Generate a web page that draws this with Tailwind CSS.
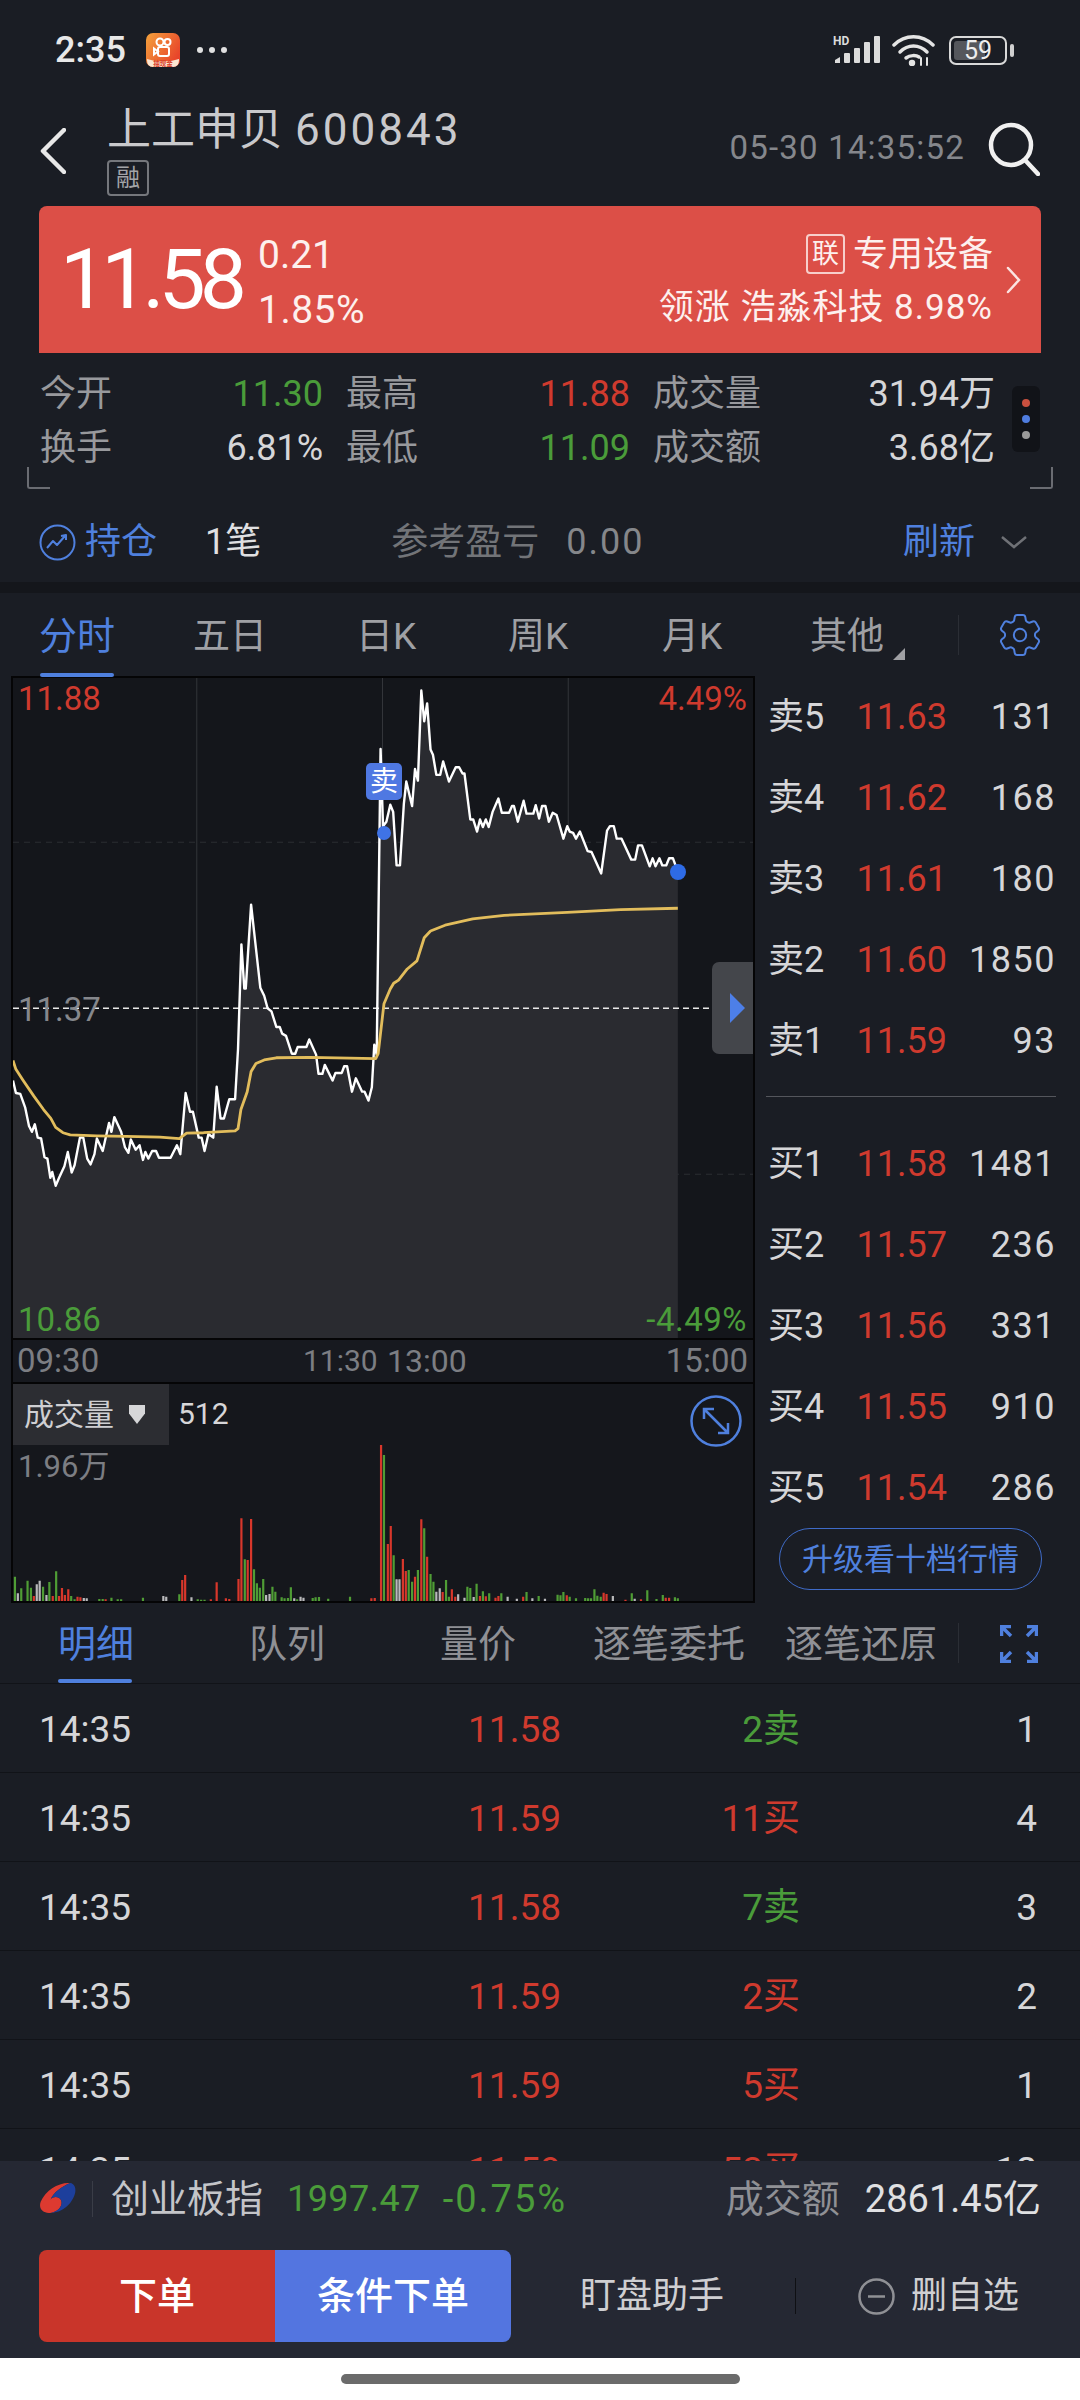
<!DOCTYPE html>
<html lang="zh-CN">
<head>
<meta charset="UTF-8" />
<title>上工申贝 600843</title>
<script src="https://cdn.jsdelivr.net/npm/@tailwindcss/browser@4"></script>
</head>
<body class="bg-white">
<div class="w-[1080px] h-[2400px] flex flex-col overflow-hidden bg-[#1a1d24] font-['Roboto','Noto_Sans_CJK_SC',sans-serif] text-[#d6d6d8]">

  <!-- status bar -->
  <div class="h-[100px] shrink-0 flex items-center pl-[55px] pr-[66px]">
    <span class="text-[36px] font-medium text-[#e8e8e8] w-[91px]">2:35</span>
    <svg width="34" height="34" viewBox="0 0 34 34">
      <defs><linearGradient id="ks" x1="0" y1="0" x2="1" y2="0.6"><stop offset="0" stop-color="#f4a23c"/><stop offset="1" stop-color="#e8442a"/></linearGradient></defs>
      <rect width="34" height="34" rx="7" fill="url(#ks)"/>
      <path d="M1 26 Q17 31 33 26 V27 Q33 34 27 34 H7 Q1 34 1 27Z" fill="#fbe6d2"/>
      <g fill="none" stroke="#fff" stroke-width="2"><circle cx="14" cy="9" r="3.500"/><circle cx="21.500" cy="9" r="3"/><rect x="12" y="14" width="11" height="9" rx="2"/><path d="M12 18.500 L8 15.500 V21.500Z"/></g>
      <text x="17" y="32.500" font-size="6.500" font-weight="700" text-anchor="middle" fill="#d8402a">抽现金</text>
    </svg>
    <div class="ml-[17px] flex gap-[6px]">
      <span class="w-[6px] h-[6px] rounded-full bg-[#e0e0e0]"></span>
      <span class="w-[6px] h-[6px] rounded-full bg-[#e0e0e0]"></span>
      <span class="w-[6px] h-[6px] rounded-full bg-[#e0e0e0]"></span>
    </div>
    <div class="ml-auto flex items-center">
      <svg width="47" height="28" viewBox="0 0 47 28" fill="#dcdcdc">
        <text x="0" y="9" font-size="12" font-weight="700" font-family="Roboto">HD</text>
        <path d="M2 27 V24 L7 21 V27Z"/><rect x="11" y="17" width="6" height="10" rx="1"/><rect x="21" y="12" width="6" height="15" rx="1"/><rect x="31" y="6" width="6" height="21" rx="1"/><rect x="41" y="0" width="6" height="27" rx="1"/>
      </svg>
      <svg class="ml-[12px]" width="43" height="32" viewBox="0 0 43 32" fill="none" stroke="#e4e4e4" stroke-width="3.500" stroke-linecap="round">
        <path d="M2 11 C13 0 30 0 41 11"/><path d="M8 18 C16 10 27 10 35 18"/><path d="M14 24 C18 21 24 21 27 23"/><circle cx="20" cy="29" r="1.500" fill="#e4e4e4"/>
        <path d="M29 24 V31 M35 24 V31" stroke-width="2"/>
      </svg>
      <div class="ml-[14px] flex items-center">
        <div class="w-[58px] h-[29px] rounded-[7px] border-2 border-[#d8d8d8] p-[3px] relative">
          <div class="w-[31px] h-full rounded-[3px] bg-[#55575c]"></div>
          <span class="absolute inset-0 flex items-center justify-center text-[25px] text-[#eeeeee] leading-none">59</span>
        </div>
        <div class="w-[4px] h-[13px] ml-[3px] bg-[#d0d0d0] rounded-[2px]"></div>
      </div>
    </div>
  </div>

  <!-- header -->
  <div class="h-[106px] shrink-0 relative flex pl-[40px] pr-[40px]">
    <svg class="mt-[28px]" width="26" height="46" viewBox="0 0 26 46" fill="none" stroke="#e8e8e8" stroke-width="4.500" stroke-linecap="round" stroke-linejoin="round"><path d="M24 2 L3 23 L24 44"/></svg>
    <div class="ml-[41px]">
      <div class="h-[60px] flex items-center text-[44px] leading-none text-[#c9c9cc]">上工申贝<span class="ml-[12px] tracking-[3px]">600843</span></div>
      <div class="w-[42px] h-[36px] border-2 border-[#75777c] rounded-[4px] flex items-center justify-center text-[24px] leading-none text-[#a3a4a8]">融</div>
    </div>
    <span class="ml-auto mt-[31px] text-[33px] leading-[34px] text-[#85878c] tracking-[1.2px]">05-30 14:35:52</span>
    <svg class="ml-[23px] mt-[22px]" width="52" height="54" viewBox="0 0 52 54" fill="none" stroke="#f0f0f0" stroke-width="4.500" stroke-linecap="round"><circle cx="23" cy="23" r="20"/><path d="M37 38 L50 52"/></svg>
  </div>

  <!-- price card -->
  <div class="mx-[39px] h-[147px] shrink-0 rounded-t-[8px] bg-[#dc4f47] flex items-center pl-[21px] pr-[20px] text-white">
    <span class="text-[84px] leading-none tracking-[-6px]">11.58</span>
    <div class="ml-[17px] pt-[6px] text-[39px] leading-none text-[#fdf0ee] flex flex-col gap-[16px]">
      <span>0.21</span>
      <span class="tracking-[0.5px]">1.85%</span>
    </div>
    <div class="ml-auto flex flex-col items-end gap-[16px] text-[#fdf0ee]">
      <div class="flex items-center text-[35px] leading-none">
        <span class="w-[39px] h-[40px] border-2 border-[#f7cfcb] rounded-[4px] flex items-center justify-center text-[27px] mr-[8px]">联</span>专用设备
      </div>
      <div class="text-[35px] leading-none tracking-[1px]">领涨 浩淼科技 8.98%</div>
    </div>
    <svg class="ml-[13px]" width="15" height="28" viewBox="0 0 15 28" fill="none" stroke="#fbe4e2" stroke-width="2.500" stroke-linecap="round"><path d="M2 2 L13 14 L2 26"/></svg>
  </div>

  <!-- stats -->
  <div class="h-[121px] shrink-0 relative pt-[14px] pl-[40px]">
    <div class="grid grid-cols-[283px_284px_342px] gap-x-[23px] text-[36px] leading-[54px]">
      <div class="flex justify-between"><span class="text-[#98999d]">今开</span><span class="text-[#4a9c3a]">11.30</span></div>
      <div class="flex justify-between"><span class="text-[#98999d]">最高</span><span class="text-[#cf3a2e]">11.88</span></div>
      <div class="flex justify-between"><span class="text-[#98999d]">成交量</span><span>31.94万</span></div>
      <div class="flex justify-between"><span class="text-[#98999d]">换手</span><span>6.81%</span></div>
      <div class="flex justify-between"><span class="text-[#98999d]">最低</span><span class="text-[#4a9c3a]">11.09</span></div>
      <div class="flex justify-between"><span class="text-[#98999d]">成交额</span><span>3.68亿</span></div>
    </div>
    <div class="absolute left-[1012px] top-[33px] w-[28px] h-[66px] rounded-[6px] bg-[#111318] flex flex-col items-center justify-center gap-[8px]">
      <span class="w-[8px] h-[8px] rounded-full bg-[#c9503f]"></span>
      <span class="w-[8px] h-[8px] rounded-full bg-[#4f7de0]"></span>
      <span class="w-[8px] h-[8px] rounded-full bg-[#9a9a9a]"></span>
    </div>
    <div class="absolute left-[27px] top-[114px] w-[23px] h-[22px] border-l-2 border-b-2 border-[#6a6c72] rounded-bl-[3px]"></div>
    <div class="absolute left-[1030px] top-[114px] w-[23px] h-[22px] border-r-2 border-b-2 border-[#6a6c72] rounded-br-[3px]"></div>
  </div>

  <!-- holdings -->
  <div class="h-[108px] shrink-0 flex items-center pt-[28px] pl-[39px] pr-[52px] text-[36px] leading-none">
    <svg width="37" height="37" viewBox="0 0 37 37" fill="none" stroke="#4f80de" stroke-width="2"><circle cx="18.500" cy="18.500" r="17"/><path d="M8 24 L14 17 L18 21 L26 12 M22 12 L27 11 L27 16" stroke-linejoin="round"/></svg>
    <span class="ml-[9px] text-[#4f80de]">持仓</span>
    <span class="ml-[48px] text-[#e0e0e2]">1笔</span>
    <span class="ml-[130px] text-[37px] text-[#727478]">参考盈亏</span>
    <span class="ml-[27px] tracking-[2px] text-[#85878b]">0.00</span>
    <span class="ml-auto text-[#4f80de]">刷新</span>
    <svg class="ml-[25px]" width="28" height="14" viewBox="0 0 28 14" fill="none" stroke="#6f7176" stroke-width="2.500"><path d="M2 2 L14 12 L26 2"/></svg>
  </div>

  <div class="h-[11px] shrink-0 bg-[#14161b]"></div>

  <!-- chart tabs -->
  <div class="h-[83px] shrink-0 relative text-[37px] leading-none text-[#9fa0a4]">
    <span class="absolute left-[39px] top-[24px] text-[#4f80de] text-[38px]">分时</span>
    <div class="absolute left-[40px] top-[80px] w-[74px] h-[4px] rounded-full bg-[#4f80de]"></div>
    <span class="absolute left-[193px] top-[25px]">五日</span>
    <span class="absolute left-[356px] top-[25px]">日K</span>
    <span class="absolute left-[508px] top-[25px]">周K</span>
    <span class="absolute left-[662px] top-[25px]">月K</span>
    <span class="absolute left-[810px] top-[25px]">其他</span>
    <div class="absolute left-[893px] top-[55px] w-0 h-0 border-l-[12px] border-l-transparent border-b-[12px] border-b-[#9fa0a4]"></div>
    <div class="absolute left-[958px] top-[22px] w-px h-[40px] bg-[#2b2e35]"></div>
    <svg class="absolute left-[999px] top-[21px]" width="42" height="42" viewBox="2.500 2.500 19 19" fill="none" stroke="#4f80de" stroke-width="0.900" stroke-linejoin="round"><path d="M9.594 3.94c.09-.542.56-.94 1.11-.94h2.593c.55 0 1.02.398 1.11.94l.213 1.281c.063.374.313.686.645.87.074.04.147.083.22.127.325.196.72.257 1.075.124l1.217-.456a1.125 1.125 0 011.37.49l1.296 2.247a1.125 1.125 0 01-.26 1.431l-1.003.827c-.293.241-.438.613-.43.992a7.723 7.723 0 010 .255c-.008.378.137.75.43.991l1.004.827c.424.35.534.955.26 1.43l-1.298 2.247a1.125 1.125 0 01-1.369.491l-1.217-.456c-.355-.133-.75-.072-1.076.124a6.47 6.47 0 01-.22.128c-.331.183-.581.495-.644.869l-.213 1.281c-.09.543-.56.94-1.11.94h-2.594c-.55 0-1.019-.398-1.11-.94l-.213-1.281c-.062-.374-.312-.686-.644-.87a6.52 6.52 0 01-.22-.127c-.325-.196-.72-.257-1.076-.124l-1.217.456a1.125 1.125 0 01-1.369-.49l-1.297-2.247a1.125 1.125 0 01.26-1.431l1.004-.827c.292-.24.437-.613.43-.991a6.932 6.932 0 010-.255c.007-.38-.138-.751-.43-.992l-1.004-.827a1.125 1.125 0 01-.26-1.43l1.297-2.247a1.125 1.125 0 011.37-.491l1.216.456c.356.133.751.072 1.076-.124.072-.044.146-.086.22-.128.332-.183.582-.495.644-.869l.214-1.28z"/><circle cx="12" cy="12" r="2.800"/></svg>
  </div>

  <!-- chart and order book -->
  <div class="h-[927px] shrink-0 flex">
    <div class="ml-[11px] w-[744px] shrink-0 bg-[#050506] p-[2px] flex flex-col gap-[2px]">
      <div class="h-[660px] relative bg-[#14161b] overflow-hidden">
        <svg class="absolute inset-0" width="740" height="660" viewBox="27 18 1526 1479" preserveAspectRatio="none">
          <path d="M406 18V1497M789 18V1497M1172 18V1497" stroke="#33353a" stroke-width="1" vector-effect="non-scaling-stroke"/>
          <path d="M27 386H1553M27 1130H1553" stroke="#2c2e33" stroke-width="1" stroke-dasharray="6 5" vector-effect="non-scaling-stroke"/>
          <polygon fill="#2a2b30" points="27,1497 27,920 33,948 42,950 52,980 60,1022 66,1035 72,1018 78,1048 85,1050 92,1092 98,1095 104,1138 108,1125 115,1156 122,1138 133,1112 140,1080 148,1126 154,1110 165,1048 172,1048 180,1095 187,1108 195,1085 200,1050 212,1078 225,1015 230,1035 236,1002 250,1035 258,1070 265,1082 270,1052 280,1075 288,1065 295,1098 300,1080 306,1095 314,1078 322,1078 328,1093 352,1093 365,1065 372,1085 383,948 392,990 398,990 410,1048 416,1048 422,1078 430,1040 440,1048 447,934 455,1005 462,1005 473,962 485,962 491,850 498,615 504,714 507,714 518,526 537,712 545,730 552,758 560,765 570,800 577,800 582,815 590,820 602,860 609,860 614,845 632,845 638,828 652,862 657,905 665,905 670,885 686,920 692,903 705,903 710,888 716,888 726,945 734,915 747,945 752,945 760,965 767,935 772,840 777,862 785,177 790,350 797,340 805,302 811,318 818,438 825,438 833,300 838,250 850,305 856,222 862,248 869,46 875,115 881,75 888,178 893,190 900,235 908,235 914,205 926,250 940,218 947,218 954,232 958,232 970,335 976,335 984,362 990,335 996,352 1002,335 1008,352 1016,318 1028,288 1035,320 1050,320 1056,305 1060,305 1068,340 1080,293 1086,322 1100,322 1105,303 1112,333 1118,305 1125,305 1132,340 1140,320 1148,325 1162,378 1170,350 1175,362 1182,365 1188,378 1196,362 1212,406 1220,408 1240,456 1252,360 1258,350 1266,350 1272,378 1282,378 1302,425 1310,425 1316,393 1324,393 1340,440 1346,422 1352,440 1360,422 1366,438 1374,438 1380,422 1388,422 1398,452 1398,1497"/>
          <path d="M27 758H1553" stroke="#e8e8e8" stroke-width="1.500" stroke-dasharray="6 4" vector-effect="non-scaling-stroke"/>
          <polyline fill="none" stroke="#ffffff" stroke-width="2.400" stroke-linejoin="round" vector-effect="non-scaling-stroke" points="27,920 33,948 42,950 52,980 60,1022 66,1035 72,1018 78,1048 85,1050 92,1092 98,1095 104,1138 108,1125 115,1156 122,1138 133,1112 140,1080 148,1126 154,1110 165,1048 172,1048 180,1095 187,1108 195,1085 200,1050 212,1078 225,1015 230,1035 236,1002 250,1035 258,1070 265,1082 270,1052 280,1075 288,1065 295,1098 300,1080 306,1095 314,1078 322,1078 328,1093 352,1093 365,1065 372,1085 383,948 392,990 398,990 410,1048 416,1048 422,1078 430,1040 440,1048 447,934 455,1005 462,1005 473,962 485,962 491,850 498,615 504,714 507,714 518,526 537,712 545,730 552,758 560,765 570,800 577,800 582,815 590,820 602,860 609,860 614,845 632,845 638,828 652,862 657,905 665,905 670,885 686,920 692,903 705,903 710,888 716,888 726,945 734,915 747,945 752,945 760,965 767,935 772,840 777,862 785,177 790,350 797,340 805,302 811,318 818,438 825,438 833,300 838,250 850,305 856,222 862,248 869,46 875,115 881,75 888,178 893,190 900,235 908,235 914,205 926,250 940,218 947,218 954,232 958,232 970,335 976,335 984,362 990,335 996,352 1002,335 1008,352 1016,318 1028,288 1035,320 1050,320 1056,305 1060,305 1068,340 1080,293 1086,322 1100,322 1105,303 1112,333 1118,305 1125,305 1132,340 1140,320 1148,325 1162,378 1170,350 1175,362 1182,365 1188,378 1196,362 1212,406 1220,408 1240,456 1252,360 1258,350 1266,350 1272,378 1282,378 1302,425 1310,425 1316,393 1324,393 1340,440 1346,422 1352,440 1360,422 1366,438 1374,438 1380,422 1388,422 1398,452"/>
          <polyline fill="none" stroke="#e2bd5c" stroke-width="2.800" stroke-linejoin="round" vector-effect="non-scaling-stroke" points="27,875 33,895 48,920 70,955 90,985 105,1005 115,1025 130,1037 145,1042 200,1044 260,1045 330,1047 370,1050 385,1038 420,1037 485,1033 491,1028 497,985 510,945 518,900 528,882 545,874 570,869 640,868 775,871 780,860 792,748 805,715 812,702 822,695 840,670 860,652 875,600 888,585 918,572 975,558 1040,550 1170,543 1280,537 1398,534"/>
        </svg>
        <span class="absolute left-[5px] top-[4px] text-[33px] leading-[34px] text-[#cf3a2e]">11.88</span>
        <span class="absolute right-[6px] top-[4px] text-[33px] leading-[34px] text-[#cf3a2e]">4.49%</span>
        <span class="absolute left-[5px] top-[315px] text-[33px] leading-[34px] text-[#85878c]">11.37</span>
        <span class="absolute left-[5px] bottom-[1px] text-[33px] leading-[34px] text-[#4a9c3a]">10.86</span>
        <span class="absolute right-[6px] bottom-[1px] text-[33px] leading-[34px] tracking-[0.5px] text-[#4a9c3a]">-4.49%</span>
        <div class="absolute left-[353px] top-[85px] w-[36px] h-[37px] rounded-[5px] bg-[#4f78e2] flex items-center justify-center text-[28px] leading-none text-white">卖</div>
        <div class="absolute left-[364px] top-[148px] w-[14px] h-[14px] rounded-full bg-[#3f73e6]"></div>
        <div class="absolute left-[657px] top-[186px] w-[16px] h-[16px] rounded-full bg-[#2e6be6]"></div>
        <div class="absolute left-[699px] top-[284px] w-[41px] h-[92px] rounded-l-[7px] bg-[#44464b] flex items-center pl-[18px]">
          <div class="w-0 h-0 border-y-[15px] border-y-transparent border-l-[15px] border-l-[#4d7fe8]"></div>
        </div>
      </div>
      <div class="h-[42px] shrink-0 bg-[#17191f] relative text-[33px] leading-[42px] text-[#7c7e83]">
        <span class="absolute left-[4px]">09:30</span>
        <span class="absolute left-[290px] text-[30px]">11:30</span>
        <span class="absolute left-[374px] text-[32px]">13:00</span>
        <span class="absolute right-[5px]">15:00</span>
      </div>
      <div class="flex-1 relative bg-[#15171c] overflow-hidden">
        <div class="w-[156px] h-[61px] bg-[#2c2d32] flex items-center pl-[11px] text-[30px] leading-none text-[#cfcfd2]">成交量
          <div class="ml-[15px] w-[16px] h-[19px] bg-[#d6d6d8] [clip-path:polygon(0_0,100%_0,100%_45%,50%_100%,0_45%)]"></div>
        </div>
        <span class="absolute left-[165px] top-[13px] text-[30px] leading-[34px] text-[#d6d6d8]">512</span>
        <span class="absolute left-[5px] top-[66px] text-[31px] leading-[34px] text-[#7c7e83]">1.96万</span>
        <svg class="absolute left-[677px] top-[11px]" width="52" height="52" viewBox="0 0 52 52" fill="none" stroke="#4f80de" stroke-width="2.500"><circle cx="26" cy="26" r="24.500"/><path d="M14 14 L38 38 M14 24 V14 H24 M38 28 V38 H28"/></svg>
        <svg class="absolute inset-0" width="740" height="217" viewBox="27 132 1526 651" preserveAspectRatio="none">
          <g fill="none" stroke-width="2.200">
            <path vector-effect="non-scaling-stroke" stroke="#4f9d35" d="M31 783V710M44 783V745M57 783V722M64 783V743M89 783V740M102 783V726M116 783V694M147 783V768M154 783V778M205 783V777M212 783V777M230 783V773M243 783V778M250 783V778M295 783V773M370 783V763M408 783V778M415 783V779M422 783V779M505 783V658M524 783V688M530 783V730M536 783V743M543 783V717M562 783V740M568 783V755M581 783V772M587 783V775M594 783V774M600 783V742M613 783V778M645 783V774M651 783V772M658 783V771M677 783V776M722 783V770M792 783V345M812 783V646M843 783V690M850 783V725M862 783V690M875 783V565M888 783V702M894 783V725M920 783V720M926 783V770M964 783V740M970 783V744M983 783V731M996 783V754M1009 783V760M1034 783V760M1086 783V756M1111 783V768M1150 783V764M1156 783V766M1162 783V756M1175 783V770M1188 783V775M1207 783V774M1213 783V775M1219 783V775M1226 783V748M1232 783V767M1239 783V770M1303 783V760M1335 783V751M1354 783V777M1367 783V765M1392 783V772M1398 783V775"/>
            <path vector-effect="non-scaling-stroke" stroke="#d8372b" d="M70 783V768M109 783V768M122 783V768M128 783V744M134 783V765M141 783V748M160 783V770M166 783V772M218 783V778M376 783V720M382 783V705M435 783V778M447 783V727M466 783V775M473 783V777M492 783V717M498 783V535M511 783V660M518 783V537M766 783V775M773 783V774M786 783V315M800 783V612M806 783V558M831 783V657M837 783V693M856 783V710M869 783V538M881 783V650M913 783V756M932 783V748M939 783V770M990 783V768M1002 783V769M1022 783V773M1028 783V768M1079 783V770M1169 783V766M1245 783V758M1251 783V762M1290 783V779M1322 783V778M1373 783V773M1380 783V773"/>
            <path vector-effect="non-scaling-stroke" stroke="#b9b9bb" d="M37 783V760M76 783V733M82 783V722M96 783V765M173 783V774M179 783V775M337 783V768M343 783V770M395 783V772M549 783V765M556 783V762M607 783V775M620 783V770M626 783V773M818 783V718M824 783V718M900 783V755M907 783V745M945 783V763M958 783V773M977 783V771M1047 783V770M1066 783V776M1098 783V775M1124 783V776M1264 783V768M1309 783V776"/>
          </g>
        </svg>
      </div>
    </div>

    <!-- order book -->
    <div class="w-[325px] pl-[13px] pr-[24px] text-[36px] leading-none whitespace-nowrap">
      <div class="h-[81px] flex items-center"><span class="w-[56px]">卖5</span><span class="w-[123px] text-right text-[#cf3a2e]">11.63</span><span class="flex-1 text-right tracking-[1.500px]">131</span></div>
      <div class="h-[81px] flex items-center"><span class="w-[56px]">卖4</span><span class="w-[123px] text-right text-[#cf3a2e]">11.62</span><span class="flex-1 text-right tracking-[1.500px]">168</span></div>
      <div class="h-[81px] flex items-center"><span class="w-[56px]">卖3</span><span class="w-[123px] text-right text-[#cf3a2e]">11.61</span><span class="flex-1 text-right tracking-[1.500px]">180</span></div>
      <div class="h-[81px] flex items-center"><span class="w-[56px]">卖2</span><span class="w-[123px] text-right text-[#cf3a2e]">11.60</span><span class="flex-1 text-right tracking-[1.500px]">1850</span></div>
      <div class="h-[81px] flex items-center"><span class="w-[56px]">卖1</span><span class="w-[123px] text-right text-[#cf3a2e]">11.59</span><span class="flex-1 text-right tracking-[1.500px]">93</span></div>
      <div class="h-px mt-[15px] mb-[26px] -ml-[2px] bg-[#54565c]"></div>
      <div class="h-[81px] flex items-center"><span class="w-[56px]">买1</span><span class="w-[123px] text-right text-[#cf3a2e]">11.58</span><span class="flex-1 text-right tracking-[1.500px]">1481</span></div>
      <div class="h-[81px] flex items-center"><span class="w-[56px]">买2</span><span class="w-[123px] text-right text-[#cf3a2e]">11.57</span><span class="flex-1 text-right tracking-[1.500px]">236</span></div>
      <div class="h-[81px] flex items-center"><span class="w-[56px]">买3</span><span class="w-[123px] text-right text-[#cf3a2e]">11.56</span><span class="flex-1 text-right tracking-[1.500px]">331</span></div>
      <div class="h-[81px] flex items-center"><span class="w-[56px]">买4</span><span class="w-[123px] text-right text-[#cf3a2e]">11.55</span><span class="flex-1 text-right tracking-[1.500px]">910</span></div>
      <div class="h-[81px] flex items-center"><span class="w-[56px]">买5</span><span class="w-[123px] text-right text-[#cf3a2e]">11.54</span><span class="flex-1 text-right tracking-[1.500px]">286</span></div>
      <div class="ml-[11px] w-[263px] h-[62px] rounded-full border border-[#3f6bc8] flex items-center justify-center text-[31px] text-[#4f80de]">升级看十档行情</div>
    </div>
  </div>

  <!-- detail tabs -->
  <div class="h-[81px] shrink-0 relative border-b border-[#111318] text-[38px] leading-none text-[#8f9095]">
    <span class="absolute left-[58px] top-[22px] text-[#4f80de]">明细</span>
    <div class="absolute left-[58px] top-[76px] w-[74px] h-[4px] rounded-full bg-[#4f80de]"></div>
    <span class="absolute left-[249px] top-[22px]">队列</span>
    <span class="absolute left-[440px] top-[22px]">量价</span>
    <span class="absolute left-[593px] top-[22px]">逐笔委托</span>
    <span class="absolute left-[785px] top-[22px]">逐笔还原</span>
    <div class="absolute left-[958px] top-[20px] w-px h-[40px] bg-[#2b2e35]"></div>
    <svg class="absolute left-[1000px] top-[22px]" width="38" height="38" viewBox="0 0 38 38" fill="none" stroke="#4f80de" stroke-width="3.500"><path d="M1.500 11V1.500H11M2 2L11 11M27 1.500H36.500V11M36 2L27 11M1.500 27V36.500H11M2 36L11 27M36.500 27V36.500H27M36 36L27 27"/></svg>
  </div>

  <!-- trade rows -->
  <div class="flex-1 overflow-hidden text-[37px] leading-none">
    <div class="h-[89px] pt-[2px] pl-[39px] grid grid-cols-[94px_428px_239px_237px] items-center border-b border-[#111318]"><span>14:35</span><span class="text-right text-[#cf3a2e]">11.58</span><span class="text-right text-[#4a9c3a]">2卖</span><span class="text-right">1</span></div>
    <div class="h-[89px] pt-[2px] pl-[39px] grid grid-cols-[94px_428px_239px_237px] items-center border-b border-[#111318]"><span>14:35</span><span class="text-right text-[#cf3a2e]">11.59</span><span class="text-right text-[#cf3a2e]">11买</span><span class="text-right">4</span></div>
    <div class="h-[89px] pt-[2px] pl-[39px] grid grid-cols-[94px_428px_239px_237px] items-center border-b border-[#111318]"><span>14:35</span><span class="text-right text-[#cf3a2e]">11.58</span><span class="text-right text-[#4a9c3a]">7卖</span><span class="text-right">3</span></div>
    <div class="h-[89px] pt-[2px] pl-[39px] grid grid-cols-[94px_428px_239px_237px] items-center border-b border-[#111318]"><span>14:35</span><span class="text-right text-[#cf3a2e]">11.59</span><span class="text-right text-[#cf3a2e]">2买</span><span class="text-right">2</span></div>
    <div class="h-[89px] pt-[2px] pl-[39px] grid grid-cols-[94px_428px_239px_237px] items-center border-b border-[#111318]"><span>14:35</span><span class="text-right text-[#cf3a2e]">11.59</span><span class="text-right text-[#cf3a2e]">5买</span><span class="text-right">1</span></div>
    <div class="h-[89px] pb-[6px] pl-[39px] grid grid-cols-[94px_428px_239px_237px] items-center"><span>14:35</span><span class="text-right text-[#cf3a2e]">11.59</span><span class="text-right text-[#cf3a2e]">53买</span><span class="text-right">12</span></div>
  </div>

  <!-- bottom bar -->
  <div class="h-[197px] shrink-0 bg-[#252833] px-[39px]">
    <div class="h-[73px] pt-[2px] flex items-center text-[38px] leading-none">
      <svg width="38" height="33" viewBox="25 35 115 100"><path d="M120 38 C85 35 45 60 30 95 C22 118 40 132 62 128 C85 124 98 105 92 90 C85 78 68 78 60 88 C70 65 95 48 120 38Z" fill="#dd3a30"/><path d="M120 38 C95 48 70 65 60 88 C68 78 85 78 92 90 C98 105 85 124 62 128 C95 128 128 100 135 65 C137 50 130 40 120 38Z" fill="#1d3f9c"/></svg>
      <div class="ml-[15px] w-px h-[36px] bg-[#3a3d47]"></div>
      <span class="ml-[18px] text-[#c4c5c9]">创业板指</span>
      <span class="ml-[24px] text-[36px] tracking-[0.4px] text-[#4a9c3a]">1997.47</span>
      <span class="ml-[22px] tracking-[2px] text-[#4a9c3a]">-0.75%</span>
      <span class="ml-auto text-[#8f9095]">成交额</span>
      <span class="ml-[25px] text-[#e0e0e2]">2861.45亿</span>
    </div>
    <div class="mt-[16px] h-[92px] flex items-center">
      <div class="w-[236px] h-full rounded-l-[8px] bg-[#c9352a] flex items-center justify-center text-[38px] font-medium text-white">下单</div>
      <div class="w-[236px] h-full rounded-r-[8px] bg-[#5375e0] flex items-center justify-center text-[38px] font-medium text-white">条件下单</div>
      <span class="ml-[69px] w-[145px] text-[36px] text-[#cfcfd2] whitespace-nowrap">盯盘助手</span>
      <div class="ml-[70px] w-px h-[36px] bg-[#0f1014]"></div>
      <svg class="ml-[62px]" width="37" height="37" viewBox="0 0 37 37" fill="none" stroke="#8f9095" stroke-width="2.500"><circle cx="18.500" cy="18.500" r="17"/><path d="M10 18.500H27"/></svg>
      <span class="ml-[16px] text-[36px] text-[#cfcfd2] whitespace-nowrap">删自选</span>
    </div>
  </div>

  <!-- home indicator -->
  <div class="h-[42px] shrink-0 bg-white flex justify-center pt-[16px]">
    <div class="w-[399px] h-[10px] rounded-full bg-[#6b6b6b]"></div>
  </div>
</div>
</body>
</html>
